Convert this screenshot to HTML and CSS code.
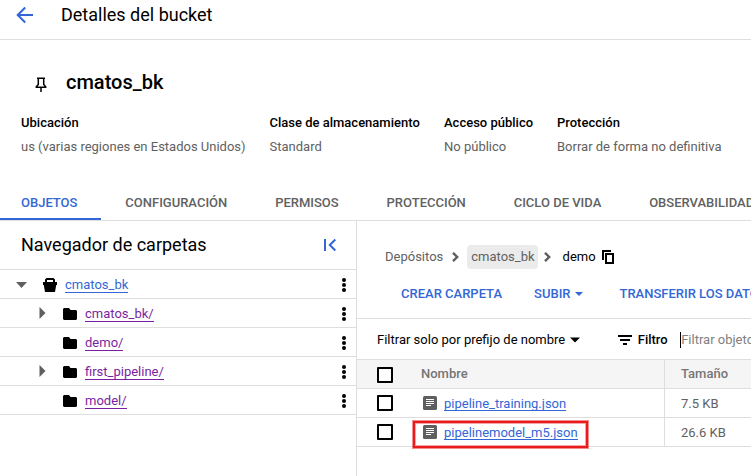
FILE: index.html
```html
<!DOCTYPE html>
<html lang="es">
<head>
<meta charset="utf-8">
<title>Detalles del bucket</title>
<link rel="stylesheet" href="styles.css">
</head>
<body>
<header class="topbar">
  <svg class="back" width="18" height="18" viewBox="0 0 18 18"><path d="M17 9H2M9.200 1.500L1.700 9l7.500 7.500"/></svg>
  <h1>Detalles del bucket</h1>
</header>
<section class="summary">
  <div class="bucket-title">
    <svg class="pin" width="12" height="16" viewBox="0 0 12 16"><path d="M2 1.200h8M3.300 1.200v6.300L1.300 9.700v.6h9.400v-.6l-2-2.200V1.200M6 10.300V15"/></svg>
    <h2>cmatos_bk</h2>
  </div>
  <dl class="facts">
    <div class="fact location"><dt>Ubicación</dt><dd>us (varias regiones en Estados Unidos)</dd></div>
    <div class="fact storage"><dt>Clase de almacenamiento</dt><dd>Standard</dd></div>
    <div class="fact access"><dt>Acceso público</dt><dd>No público</dd></div>
    <div class="fact"><dt>Protección</dt><dd>Borrar de forma no definitiva</dd></div>
  </dl>
</section>
<nav class="tabs">
  <a class="tab active">OBJETOS</a>
  <a class="tab">CONFIGURACIÓN</a>
  <a class="tab">PERMISOS</a>
  <a class="tab">PROTECCIÓN</a>
  <a class="tab">CICLO DE VIDA</a>
  <a class="tab">OBSERVABILIDAD</a>
</nav>
<main class="content">
  <aside class="folders">
    <div class="folders-head">
      <h3>Navegador de carpetas</h3>
      <svg class="collapse" width="14" height="14" viewBox="0 0 14 14"><path d="M2 1v12M12.300 1.500L6.800 7l5.500 5.500"/></svg>
    </div>
    <div class="node root">
      <svg class="twist" width="11" height="6" viewBox="0 0 11 6"><path d="M0 0h11L5.500 6z"/></svg>
      <svg class="bucket" width="14" height="14" viewBox="0 0 14 14"><path fill-rule="evenodd" d="M0 4h2V1.500L3.500 0h7L12 1.500V4h2v3h-.8L12 14H2L.8 7H0zM4 2v2h6V2z"/></svg>
      <a class="link">cmatos_bk</a>
      <svg class="more" width="4" height="14" viewBox="0 0 4 14"><circle cx="2" cy="2" r="2"/><circle cx="2" cy="7" r="2"/><circle cx="2" cy="12" r="2"/></svg>
    </div>
    <div class="node">
      <svg class="twist side" width="7" height="12" viewBox="0 0 7 12"><path d="M.5 0v12L6.500 6z"/></svg>
      <svg class="folder" width="14" height="12" viewBox="0 0 14 12"><path d="M1 0h5l1.500 2H13l1 1v8l-1 1H1l-1-1V1z"/></svg>
      <a class="link visited">cmatos_bk/</a>
      <svg class="more" width="4" height="14" viewBox="0 0 4 14"><circle cx="2" cy="2" r="2"/><circle cx="2" cy="7" r="2"/><circle cx="2" cy="12" r="2"/></svg>
    </div>
    <div class="node">
      <span class="twist side"></span>
      <svg class="folder" width="14" height="12" viewBox="0 0 14 12"><path d="M1 0h5l1.500 2H13l1 1v8l-1 1H1l-1-1V1z"/></svg>
      <a class="link visited">demo/</a>
      <svg class="more" width="4" height="14" viewBox="0 0 4 14"><circle cx="2" cy="2" r="2"/><circle cx="2" cy="7" r="2"/><circle cx="2" cy="12" r="2"/></svg>
    </div>
    <div class="node">
      <svg class="twist side" width="7" height="12" viewBox="0 0 7 12"><path d="M.5 0v12L6.500 6z"/></svg>
      <svg class="folder" width="14" height="12" viewBox="0 0 14 12"><path d="M1 0h5l1.500 2H13l1 1v8l-1 1H1l-1-1V1z"/></svg>
      <a class="link visited">first_pipeline/</a>
      <svg class="more" width="4" height="14" viewBox="0 0 4 14"><circle cx="2" cy="2" r="2"/><circle cx="2" cy="7" r="2"/><circle cx="2" cy="12" r="2"/></svg>
    </div>
    <div class="node">
      <span class="twist side"></span>
      <svg class="folder" width="14" height="12" viewBox="0 0 14 12"><path d="M1 0h5l1.500 2H13l1 1v8l-1 1H1l-1-1V1z"/></svg>
      <a class="link visited">model/</a>
      <svg class="more" width="4" height="14" viewBox="0 0 4 14"><circle cx="2" cy="2" r="2"/><circle cx="2" cy="7" r="2"/><circle cx="2" cy="12" r="2"/></svg>
    </div>
  </aside>
  <section class="objects">
    <div class="crumbs">
      <span>Depósitos</span>
      <svg class="chev" width="7" height="10" viewBox="0 0 7 10"><path d="M1 .8L5.200 5 1 9.200"/></svg>
      <span class="chip">cmatos_bk</span>
      <svg class="chev second" width="7" height="10" viewBox="0 0 7 10"><path d="M1 .8L5.200 5 1 9.200"/></svg>
      <span class="current">demo</span>
      <svg class="copy" width="12" height="14" viewBox="0 0 12 14"><path d="M1 10V1h8M4 4h7v9H4z"/></svg>
    </div>
    <div class="actions">
      <a class="create">CREAR CARPETA</a>
      <a class="upload">SUBIR<svg width="8" height="4" viewBox="0 0 8 4"><path d="M0 0h8L4 4z"/></svg></a>
      <a>TRANSFERIR LOS DATOS</a>
    </div>
    <div class="filterbar">
      <span class="prefix">Filtrar solo por prefijo de nombre</span>
      <svg class="drop" width="10" height="6" viewBox="0 0 10 6"><path d="M0 .500h10L5 5.500z"/></svg>
      <span class="divider"></span>
      <svg class="filter-icon" width="14" height="10" viewBox="0 0 14 10"><path d="M0 1h14M2 5h10M5 9h4"/></svg>
      <b>Filtro</b>
      <span class="query">Filtrar objetos y carpetas</span>
    </div>
    <div class="row head">
      <div class="name"><span class="check"></span><span>Nombre</span></div>
      <div class="size">Tamaño</div>
    </div>
    <div class="row">
      <div class="name"><span class="check"></span><svg class="doc" width="14" height="14" viewBox="0 0 14 14"><rect width="14" height="14" rx="1.500"/><path d="M3 3.500h8M3 5.500h8M3 7.500h8M3 9.500h5"/></svg><a class="link">pipeline_training.json</a></div>
      <div class="size">7.5 KB</div>
    </div>
    <div class="row">
      <div class="name"><span class="check"></span><svg class="doc" width="14" height="14" viewBox="0 0 14 14"><rect width="14" height="14" rx="1.500"/><path d="M3 3.500h8M3 5.500h8M3 7.500h8M3 9.500h5"/></svg><a class="link">pipelinemodel_m5.json</a><span class="highlight"></span></div>
      <div class="size">26.6 KB</div>
    </div>
  </section>
</main>
</body>
</html>
```

FILE: styles.css
```css
* { box-sizing: border-box; }
body {
  margin: 0;
  width: 751px;
  height: 476px;
  overflow: hidden;
  background: #fff;
  color: #000;
  font: 13px/20px Roboto, sans-serif;
  white-space: nowrap;
  display: flex;
  flex-direction: column;
}
h1, h2, h3, dl, dd { margin: 0; font-weight: 400; }
svg { display: block; flex: none; fill: none; }

.topbar { height: 40px; flex: none; border-bottom: 1px solid #dedede; display: flex; padding: 3px 0 0 16px; }
.back { margin: 3px 27px 0 0; stroke: #3367d6; stroke-width: 2; }
h1 { font-size: 18px; line-height: 24px; }

.summary { height: 144px; flex: none; padding: 28px 0 0 21px; }
.bucket-title { display: flex; height: 28px; }
.pin { margin: 9px 19px 0 14px; stroke: #000; stroke-width: 1.5; }
h2 { font-size: 20px; line-height: 28px; font-weight: 500; }
.facts { display: flex; margin-top: 17px; }
.fact { flex: none; }
.location { width: 248.500px; }
.storage { width: 174.500px; }
.access { width: 113px; }
dt { font-weight: 500; }
dd { color: #616161; margin-top: 4px; }

.tabs { height: 37px; flex: none; display: flex; border-bottom: 1px solid #dedede; }
.tab { flex: none; height: 36px; padding: 9px 23.950px 0; font-weight: 500; color: #616161; }
.active { color: #3367d6; border-bottom: 2px solid #3367d6; padding-left: 21px; }

.content { display: flex; flex: 1; }
.folders { width: 357px; flex: none; border-right: 1px solid #dedede; }
.folders-head { height: 49px; border-bottom: 1px solid #dedede; padding: 12px 19px 0 21px; display: flex; justify-content: space-between; }
h3 { font-size: 18px; line-height: 24px; }
.collapse { margin-top: 5px; stroke: #3367d6; stroke-width: 2; }
.node { height: 29px; border-bottom: 1px solid #dedede; display: flex; align-items: center; padding: 1px 10px 0 39px; }
.root { padding-left: 16px; }
.twist { fill: #5f5f5f; margin-right: 16px; }
.side { width: 7px; margin-right: 17px; margin-top: -2px; }
.bucket, .folder { fill: #000; margin-right: 8px; }
.more { margin-left: auto; fill: #000; }
.link { color: #3367d6; border-bottom: 1px solid currentColor; padding-top: 2px; line-height: 14px; }
.visited { color: #7b1fa2; }

.objects { flex: 1; min-width: 0; overflow: hidden; }
.crumbs { height: 51px; padding: 24px 0 3px 28px; display: flex; align-items: center; color: #616161; }
.chev { margin: 0 8px 0 9px; stroke: #5f5f5f; stroke-width: 2.4; }
.chip { background: #ebebeb; border-radius: 4px; padding: 2px 3.500px 2px 4px; }
.second { margin: 0 12px 0 5.500px; }
.current { color: #000; }
.copy { margin-left: 6.500px; stroke: #000; stroke-width: 2; }
.actions { height: 47px; border-bottom: 1px solid #dedede; padding: 12px 0 0 44px; display: flex; color: #3367d6; font-weight: 500; }
.create { margin-right: 32px; }
.upload { display: flex; align-items: center; height: 20px; margin-right: 36.500px; }
.upload svg { margin-left: 4.500px; fill: #3367d6; }
.filterbar { height: 41px; border-bottom: 1px solid #dedede; padding: 1px 0 0 20px; display: flex; align-items: center; }
.drop { margin: 0 16px 0 5px; fill: #000; }
.divider { width: 1px; height: 24px; background: #dedede; margin-right: 21.500px; }
.filter-icon { stroke: #000; stroke-width: 2; margin-right: 6px; }
b { font-weight: 500; }
.query { color: #808080; margin-left: 12.500px; border-left: 1px solid #000; line-height: 16px; }
.row { height: 29px; border-bottom: 1px solid #dedede; display: flex; color: #616161; }
.head { background: #f5f5f5; font-weight: 500; color: #757575; }
.name { position: relative; width: 308px; flex: none; border-right: 1px solid #dedede; padding-left: 20px; display: flex; align-items: center; }
.size { flex: 1; padding: 5px 0 0 16px; }
.head .size { padding-top: 4px; }
.check { width: 16px; height: 16px; border: 2px solid #000; border-radius: 1px; margin-right: 28px; background: #fff; }
.head .check { margin-top: 2px; }
.doc { fill: #5f5f5f; margin: 0 7px 0 2px; }
.doc path { stroke: #fff; stroke-width: 1; }
.name .link { margin-top: -1px; padding-top: 4px; line-height: 12px; }
.highlight {
  position: absolute;
  left: 56px;
  top: 3px;
  width: 175px;
  height: 27px;
  border: 2px solid #e81c1c;
  box-shadow: 0 0 0 1px rgba(232, 28, 28, .5), inset 0 0 0 1px rgba(232, 28, 28, .4);
}
```
